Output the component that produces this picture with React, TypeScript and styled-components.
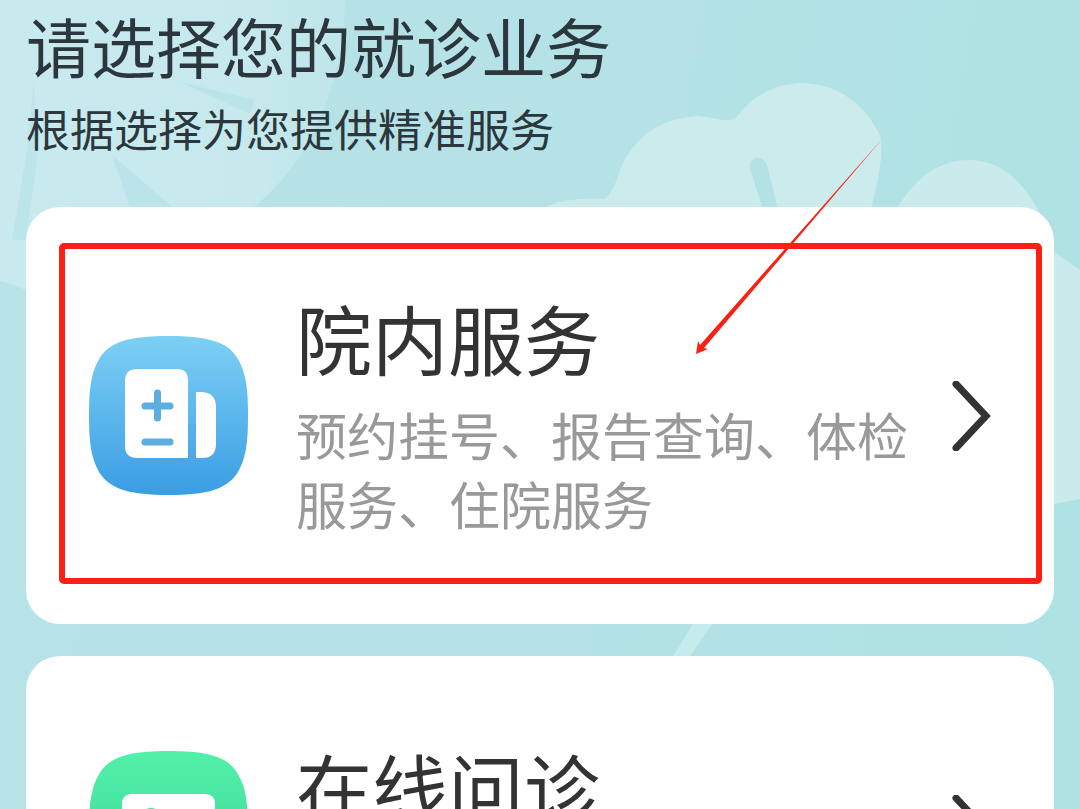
import React from "react";
import styled, { createGlobalStyle } from "styled-components";

const GlobalStyle = createGlobalStyle`
  * { box-sizing: border-box; }
  body {
    margin: 0;
    background: #b2e2e5;
    font-family: "Noto Sans CJK SC", "Noto Sans", sans-serif;
  }
`;

const Page = styled.main`
  position: relative;
  height: 100vh;
  overflow-x: hidden;
  overflow-y: auto;
  scrollbar-width: none;
  padding: 0 26px 32px;
  background: linear-gradient(100deg, #b8e3e8 0%, #b5e2e6 50%, #aee2e3 100%);
`;

const Backdrop = styled.svg`
  position: absolute;
  top: 0;
  left: 0;
  width: 100%;
  height: auto;
`;

const Header = styled.header`
  position: relative;
  padding-bottom: 40px;
`;

const Title = styled.h1`
  margin: 0;
  font-size: 65px;
  line-height: 90px;
  font-weight: 400;
  color: #2b373d;
`;

const Subtitle = styled.p`
  margin: 0;
  font-size: 44px;
  line-height: 77px;
  color: #2b373d;
`;

const CardList = styled.nav`
  position: relative;
  display: flex;
  flex-direction: column;
  gap: 32px;
`;

const Card = styled.a`
  position: relative;
  display: flex;
  align-items: center;
  padding: 78px 63px;
  border-radius: 34px;
  background: #fff;
  color: #333;
  text-decoration: none;
`;

const CardIcon = styled.svg`
  flex: none;
  width: 159px;
  height: 159px;
  margin-right: 48px;
`;

const CardText = styled.div`
  flex: 1;
  min-width: 0;
  margin-right: 36px;
  padding-bottom: 8px;
`;

const CardTitle = styled.h2`
  margin: 0 0 11px;
  font-size: 76px;
  line-height: 104px;
  font-weight: 400;
`;

const CardDescription = styled.p`
  margin: 0;
  font-size: 51px;
  line-height: 69px;
  color: #999;
`;

const Chevron = styled.svg`
  flex: none;
  width: 39px;
  height: 70px;
`;

const Highlight = styled.div`
  position: absolute;
  inset: 36px 12px 40px 33px;
  border: 6px solid #fb2112;
  border-radius: 5px;
  pointer-events: none;
`;

const Pointer = styled.svg`
  position: absolute;
  top: -70px;
  right: 170px;
  width: 190px;
  height: 218px;
  pointer-events: none;
`;

const squircle =
  "M79.500 0C122 0 138 7 147 20C157 35 159 52 159 79.500C159 107 157 124 147 139C136 153 119 159 79.500 159C40 159 23 153 12 139C2 124 0 107 0 79.500C0 52 2 35 12 20C22 6 40 0 79.500 0Z";

function RecordIcon() {
  return (
    <CardIcon viewBox="0 0 159 159" aria-hidden="true">
      <defs>
        <linearGradient id="blue" x1="0" y1="0" x2="0" y2="1">
          <stop offset="0" stopColor="#7dd0f4" />
          <stop offset="1" stopColor="#3a9de3" />
        </linearGradient>
      </defs>
      <path d={squircle} fill="url(#blue)" />
      <path d="M48 33H88Q99 33 99 44V122H48Q36 122 36 110V45Q36 33 48 33Z" fill="#fff" />
      <path d="M107 56H113Q127 57 127 71V108Q127 122 113 122H107Z" fill="#fff" />
      <path d="M56 70H81M68.500 57V82M56 106H81" stroke="#5cade0" strokeWidth="7" strokeLinecap="round" />
    </CardIcon>
  );
}

function ConsultIcon() {
  return (
    <CardIcon viewBox="0 0 159 159" aria-hidden="true">
      <defs>
        <linearGradient id="green" x1="0" y1="0" x2="0" y2="1">
          <stop offset="0" stopColor="#52f0a8" />
          <stop offset="1" stopColor="#35d394" />
        </linearGradient>
      </defs>
      <path d={squircle} fill="url(#green)" />
      <path d="M43 43H116Q126 43 126 53V107Q126 117 116 117H43Q33 117 33 107V53Q33 43 43 43Z" fill="#fff" />
      <circle cx="62" cy="68" r="11" fill="#48dfa0" />
      <path d="M45 98Q46 82 62 82T79 98Z" fill="#48dfa0" />
      <path d="M92 72H110M92 88H110" stroke="#48dfa0" strokeWidth="7" strokeLinecap="round" />
    </CardIcon>
  );
}

function ChevronIcon() {
  return (
    <Chevron viewBox="0 0 39 70" aria-hidden="true">
      <path d="M4 3L34 35L4 67" fill="none" stroke="#333" strokeWidth="7" strokeLinecap="round" />
    </Chevron>
  );
}

export default function App() {
  return (
    <>
      <GlobalStyle />
      <Page>
        <Backdrop viewBox="0 0 1080 809" aria-hidden="true">
          <defs>
            <linearGradient id="haze" x1="0" y1="0" x2="1" y2="0">
              <stop offset="0" stopColor="#c8eaee" />
              <stop offset="0.700" stopColor="#c6e9ed" />
              <stop offset="1" stopColor="#bfe6ea" />
            </linearGradient>
          </defs>
          <path d="M0 0H345C345 80 310 165 250 210L60 310Q30 288 0 281Z" fill="url(#haze)" />
          <path d="M180 82L255 100L250 114Z M112 155L172 207H130Z" fill="#bae4e9" />
          <path d="M34 80L37 160L26 240H12L27 150Z" fill="#bce5ea" />
          <path d="M545 208C557 200 580 198 605 199C616 188 618 174 622 165C638 133 664 118 698 116C714 118 727 122 735 119C752 96 773 84 802 83C845 84 870 112 881 138C883 160 877 185 871 210H778L767 165C763 154 748 156 750 168L763 210Z" fill="#cbebec" />
          <path d="M896 210C915 178 938 160 970 160C1006 161 1028 188 1043 220H890Z" fill="#c9ebec" />
          <path d="M1040 242L1054 252L1080 270V499L1054 504L1040 506Z" fill="#c9ebec" />
          <path d="M693 624H712L690 656H673Z" fill="#c6ebed" />
        </Backdrop>
        <Header>
          <Title>请选择您的就诊业务</Title>
          <Subtitle>根据选择为您提供精准服务</Subtitle>
        </Header>
        <CardList>
          <Card href="#hospital">
            <RecordIcon />
            <CardText>
              <CardTitle>院内服务</CardTitle>
              <CardDescription>预约挂号、报告查询、体检服务、住院服务</CardDescription>
            </CardText>
            <ChevronIcon />
            <Highlight />
            <Pointer viewBox="0 0 190 218" aria-hidden="true">
              <path d="M189 1L10 211L14 212L2 217L4 204L6 208Z" fill="#fb2112" />
            </Pointer>
          </Card>
          <Card href="#online">
            <ConsultIcon />
            <CardText>
              <CardTitle>在线问诊</CardTitle>
              <CardDescription>图文咨询、视频问诊</CardDescription>
            </CardText>
            <ChevronIcon />
          </Card>
        </CardList>
      </Page>
    </>
  );
}
